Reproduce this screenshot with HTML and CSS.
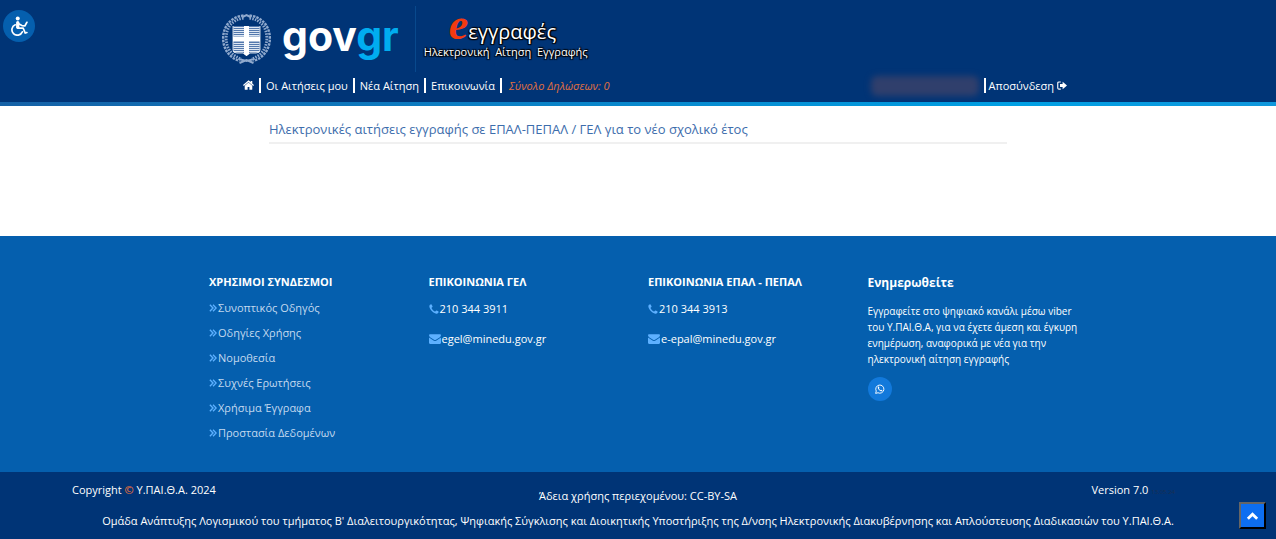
FILE: index.html
```html
<!DOCTYPE html>
<html lang="el">
<head>
<meta charset="utf-8">
<meta name="viewport" content="width=device-width, initial-scale=1">
<title>e-εγγραφές</title>
<link rel="stylesheet" href="styles.css">
</head>
<body>
<svg class="sprite" aria-hidden="true">
  <symbol id="angles" viewBox="0 0 14 14"><path d="M1.500 1.500 7 7l-5.500 5.500M7 1.500 12.500 7 7 12.500" fill="none" stroke="currentColor" stroke-width="2.400"/></symbol>
  <symbol id="phone" viewBox="0 0 16 16"><path d="M15.500 12.400c0 .8-.5 2-1.200 2.500-.8.500-1.700.8-2.700.6C6.500 14.300 1.800 9.600.6 4.500.3 3.200.7 2.100 1.500 1.300 2 .8 3 .5 3.600.5c.5 0 1.800 2.600 2.100 3.400.3.900-1.900 1.900-1.700 2.600.7 2.200 3.200 4.800 5.500 5.500.7.200 1.700-2 2.600-1.700.8.300 3.400 1.600 3.400 2.100Z"/></symbol>
  <symbol id="mail" viewBox="0 0 16 13"><path d="M0 1.500C0 .6.600 0 1.500 0h13c.9 0 1.500.6 1.500 1.500 0 1-.6 1.900-1.500 2.500L9.300 7.600c-.9.600-1.700.6-2.600 0L1.500 4C.6 3.400 0 2.500 0 1.500Zm0 2.900 6 4.200c1.400.9 2.600.9 4 0l6-4.200v7.100c0 .9-.6 1.500-1.500 1.500h-13C.6 13 0 12.400 0 11.500Z"/></symbol>
</svg>
<button class="access" type="button" aria-label="Προσβασιμότητα">
  <svg viewBox="0 0 24 24" fill="none" stroke="#fff" stroke-width="2" stroke-linecap="round" stroke-linejoin="round"><circle cx="10.500" cy="3" r="2.400" fill="#fff" stroke="none"/><path d="M10.500 14.500H17l2.500 6 2-.7M11 9l4.500 2.500L19 12l2.500-4.500M7.500 10.500a6.500 6.500 0 1 0 8.500 8.500" /><path d="M10.500 8v5.500" stroke-width="4"/></svg>
</button>
<header class="header">
  <div class="header-inner">
    <div class="brand">
      <a class="gov" href="#">
        <svg class="crest" viewBox="0 0 50 52" aria-hidden="true">
          <g fill="none" stroke="#8fa9cd">
            <path d="M22 2.500C8 4 1 15 1.700 27c.5 10 7 18 16.300 21M28 2.500C42 4 49 15 48.300 27c-.5 10-7 18-16.300 21" stroke-width="2.400" stroke-dasharray="2.500 1"/>
            <path d="M22 5C10 7 4.500 15 4.700 26c.3 10 6 17 15.300 20M28 5c12 2 17.500 10 17.300 21-.3 10-6 17-15.300 20" stroke-width="2.800" stroke-dasharray="1.500 1.200"/>
            <path d="m17 46 8 2 8-2M18 50l7-3 7 3M21 4l4-2 4 2" stroke-width="2"/>
          </g>
          <path d="M11.500 13h27v24q0 3-4 3h-6l-3.500 2.500-3.500-2.500h-6q-4 0-4-3Z" fill="#5378ad"/>
          <path d="M12 14.500h26m-26 2h26m-26 2h26m-26 2h26m-26 2h26m-26 8h26m-26 2h26m-26 2h26m-26 2h26m-26 2h26" stroke="#dce6f2" stroke-width="1"/>
          <path d="M22.500 13h5v28l-2.500 2-2.500-2ZM11.500 23.500h27v5h-27Z" fill="#fff"/>
          <path d="M11.500 13v24q0 3 4 3h6l3.500 2.500 3.500-2.500h6q4 0 4-3V13" fill="none" stroke="#fff" stroke-width=".8"/>
        </svg>
        <span class="gov-word">gov<span>gr</span></span>
      </a>
      <div class="app">
        <div class="app-name"><span class="app-e">e</span>εγγραφές</div>
        <div class="app-sub">Ηλεκτρονική&nbsp; Αίτηση&nbsp; Εγγραφής</div>
      </div>
    </div>
    <nav class="nav">
      <a href="#" aria-label="Αρχική"><svg class="home" viewBox="0 0 16 14" fill="#fff"><path d="M8 0 0 7l1.200 1.300L8 2.500l6.800 5.800L16 7l-2.500-2.200V1h-2.200v1.800Z"/><path d="M8 3.300 2.500 8V13c0 .5.300.8.800.8h3.400V10h2.600v3.800h3.400c.5 0 .8-.3.800-.8V8Z"/></svg></a>
      <a href="#">Οι Αιτήσεις μου</a>
      <a href="#">Νέα Αίτηση</a>
      <a href="#">Επικοινωνία</a>
      <span class="total">Σύνολο Δηλώσεων: 0</span>
      <span class="user"></span>
      <a class="logout" href="#">Αποσύνδεση <svg viewBox="0 0 16 14"><path d="M6 1.300H3.200C2 1.300 1.200 2 1.200 3.200v7.600c0 1.200.8 1.900 2 1.900H6" fill="none" stroke="#fff" stroke-width="1.800"/><path d="M9 1v3.500H4.800v5H9V13l7-6Z" fill="#fff"/></svg></a>
    </nav>
  </div>
</header>
<main class="main">
  <h1>Ηλεκτρονικές αιτήσεις εγγραφής σε ΕΠΑΛ-ΠΕΠΑΛ / ΓΕΛ για το νέο σχολικό έτος</h1>
</main>
<footer>
  <div class="links">
    <div class="columns">
      <section>
        <h2>ΧΡΗΣΙΜΟΙ ΣΥΝΔΕΣΜΟΙ</h2>
        <ul class="useful">
          <li><a href="#"><svg><use href="#angles"/></svg>Συνοπτικός Οδηγός</a></li>
          <li><a href="#"><svg><use href="#angles"/></svg>Οδηγίες Χρήσης</a></li>
          <li><a href="#"><svg><use href="#angles"/></svg>Νομοθεσία</a></li>
          <li><a href="#"><svg><use href="#angles"/></svg>Συχνές Ερωτήσεις</a></li>
          <li><a href="#"><svg><use href="#angles"/></svg>Χρήσιμα Έγγραφα</a></li>
          <li><a href="#"><svg><use href="#angles"/></svg>Προστασία Δεδομένων</a></li>
        </ul>
      </section>
      <section>
        <h2>ΕΠΙΚΟΙΝΩΝΙΑ ΓΕΛ</h2>
        <ul class="contact">
          <li><svg class="i-phone"><use href="#phone"/></svg>210 344 3911</li>
          <li><svg class="i-mail"><use href="#mail"/></svg>egel@minedu.gov.gr</li>
        </ul>
      </section>
      <section>
        <h2>ΕΠΙΚΟΙΝΩΝΙΑ ΕΠΑΛ - ΠΕΠΑΛ</h2>
        <ul class="contact">
          <li><svg class="i-phone"><use href="#phone"/></svg>210 344 3913</li>
          <li><svg class="i-mail"><use href="#mail"/></svg>e-epal@minedu.gov.gr</li>
        </ul>
      </section>
      <section>
        <h2 class="news-title">Ενημερωθείτε</h2>
        <p class="news">Εγγραφείτε στο ψηφιακό κανάλι μέσω viber του Υ.ΠΑΙ.Θ.Α, για να έχετε άμεση και έγκυρη ενημέρωση, αναφορικά με νέα για την ηλεκτρονική αίτηση εγγραφής</p>
        <a class="viber" href="#" aria-label="Viber"><svg viewBox="0 0 16 16"><path d="m1 15 1-3.700A6.500 6.500 0 1 1 4.800 14Z" fill="none" stroke="#fff" stroke-width="1.500"/><path d="M5.500 4c-1 .5-1.300 1.500-.9 2.600.9 2.300 2.600 4 4.900 4.900 1.100.4 2.200 0 2.500-1.300L9.900 9.100l-.9 1c-1.200-.5-2.200-1.400-2.800-2.800l.8-.9L6.300 4Z" fill="#fff"/></svg></a>
      </section>
    </div>
  </div>
  <div class="bottom">
    <div class="legal">
      <span>Copyright <span class="copy">©</span> Υ.ΠΑΙ.Θ.Α. 2024</span>
      <span class="license">Άδεια χρήσης περιεχομένου: CC-BY-SA</span>
      <span class="version">Version 7.0 <small>13.05.24</small></span>
    </div>
    <p class="team">Ομάδα Ανάπτυξης Λογισμικού του τμήματος Β' Διαλειτουργικότητας, Ψηφιακής Σύγκλισης και Διοικητικής Υποστήριξης της Δ/νσης Ηλεκτρονικής Διακυβέρνησης και Απλούστευσης Διαδικασιών του Υ.ΠΑΙ.Θ.Α.</p>
  </div>
</footer>
<button class="to-top" type="button" aria-label="Επιστροφή στην κορυφή"><svg viewBox="0 0 14 10"><path d="M2 8l5-5 5 5" fill="none" stroke="#fff" stroke-width="3"/></svg></button>
</body>
</html>
```
FILE: styles.css
```css
* { box-sizing: border-box; }
body {
  margin: 0;
  min-height: 100vh;
  display: flex;
  flex-direction: column;
  font: 11px/16px "Open Sans", "Noto Sans", sans-serif;
  color: #fff;
  background: #fff;
}
a { color: inherit; text-decoration: none; }
ul { list-style: none; margin: 0; padding: 0; }
h1, h2, p { margin: 0; }
svg { flex: none; }
.sprite { position: absolute; width: 0; height: 0; }

.access {
  position: fixed;
  top: 10px;
  left: 3px;
  width: 32px;
  height: 32px;
  padding: 0;
  border: 0;
  border-radius: 50%;
  background: #055fae;
  display: grid;
  place-items: center;
}
.access svg { width: 20px; height: 20px; }

.header { background: #003476; }
.header::after {
  content: "";
  display: block;
  height: 4px;
  background: linear-gradient(90deg, #1561a6, #00a0e4 80%, #1097dc);
}
.header-inner { max-width: 858px; margin: 0 auto; padding-top: 6px; }
.brand { display: flex; padding-left: 12px; height: 66px; }
.gov {
  display: flex;
  align-items: center;
  gap: 10px;
  padding-right: 16px;
  border-right: 1px solid #08498d;
}
.crest { width: 51px; height: 52px; }
.gov-word { font: 700 41px/50px Inter, sans-serif; padding-bottom: 6px; }
.gov-word span { color: #00adf0; }
.app { padding: 5px 0 0 8px; text-shadow: 1px 1px 1px #000, -1px 1px 1px #000, 1px -1px 1px #000, 0 0 2px #000; }
.app-name { display: flex; align-items: baseline; height: 34px; font: 20px/28px "Open Sans", sans-serif; padding-left: 25px; }
.app-e { font: italic 700 44px/28px "Liberation Serif", serif; color: #f23a10; text-shadow: none; }
.app-sub { font-size: 11px; line-height: 14px; white-space: nowrap; }
.nav { display: flex; align-items: center; height: 30px; padding: 0 0 3px 34px; white-space: nowrap; }
.nav > a:not(.logout) { padding-right: 5px; margin-right: 5px; border-right: 2px solid #fff; line-height: 15px; }
.home { width: 11px; height: 10px; }
.nav .total { color: #e0703f; font-style: italic; padding-left: 2px; }
.user {
  width: 108px;
  height: 20px;
  margin-left: auto;
  background: #303f6c;
  filter: blur(3px);
  border-radius: 6px;
}
.logout { display: flex; align-items: center; gap: 3px; margin-left: 5px; padding-left: 3px; border-left: 2px solid #fff; line-height: 15px; }
.logout svg { width: 10px; height: 9px; }

.main { width: calc(100% - 32px); max-width: 738px; margin: 0 auto; flex: 1; padding-top: 12px; }
.main h1 {
  padding-bottom: 2px;
  border-bottom: 2px solid #f0f0f0;
  font-size: 13px;
  font-weight: 400;
  line-height: 22px;
  color: #3d6dac;
}

.links { background: #055fae; padding: 37px 0 27px; }
.columns { max-width: 888px; margin: 0 auto; padding-left: 15px; display: grid; grid-template-columns: repeat(4, 1fr); gap: 5px; }
.columns h2 { font-size: 11px; font-weight: 700; line-height: 18px; white-space: nowrap; }
.useful { padding-top: 4px; color: #c3d9ee; }
.useful a { display: flex; align-items: center; gap: 1px; line-height: 25px; }
.useful svg { width: 8px; height: 8px; color: #5db0ff; }
.contact { padding-top: 10px; display: grid; gap: 14px; }
.contact li { display: flex; align-items: center; gap: 1px; line-height: 16px; }
.contact svg { fill: #5db0ff; }
.i-phone { width: 10px; height: 10px; }
.i-mail { width: 12px; height: 10px; }
.columns .news-title { font-size: 12px; line-height: 20px; }
.news { padding-top: 10px; font-size: 10px; line-height: 16px; }
.viber { width: 24px; height: 24px; margin-top: 10px; border-radius: 50%; background: #1279db; display: grid; place-items: center; }
.viber svg { width: 10px; height: 10px; }

.bottom { background: #003476; padding: 10px 72px; }
.legal { display: grid; grid-template-columns: 1fr auto 1fr; }
.copy { color: #f0703a; font-weight: 600; }
.license { padding-top: 6px; }
.version { text-align: right; padding-right: 29px; }
.version small { font-size: 6px; color: #1a2f52; }
.team { padding-top: 9px; text-align: center; white-space: nowrap; }

.to-top {
  position: fixed;
  right: 10px;
  bottom: 10px;
  width: 27px;
  height: 27px;
  padding: 0;
  border: 2px outset #111;
  background: #0d6ef0;
  display: grid;
  place-items: center;
}
.to-top svg { width: 13px; height: 10px; }
```
